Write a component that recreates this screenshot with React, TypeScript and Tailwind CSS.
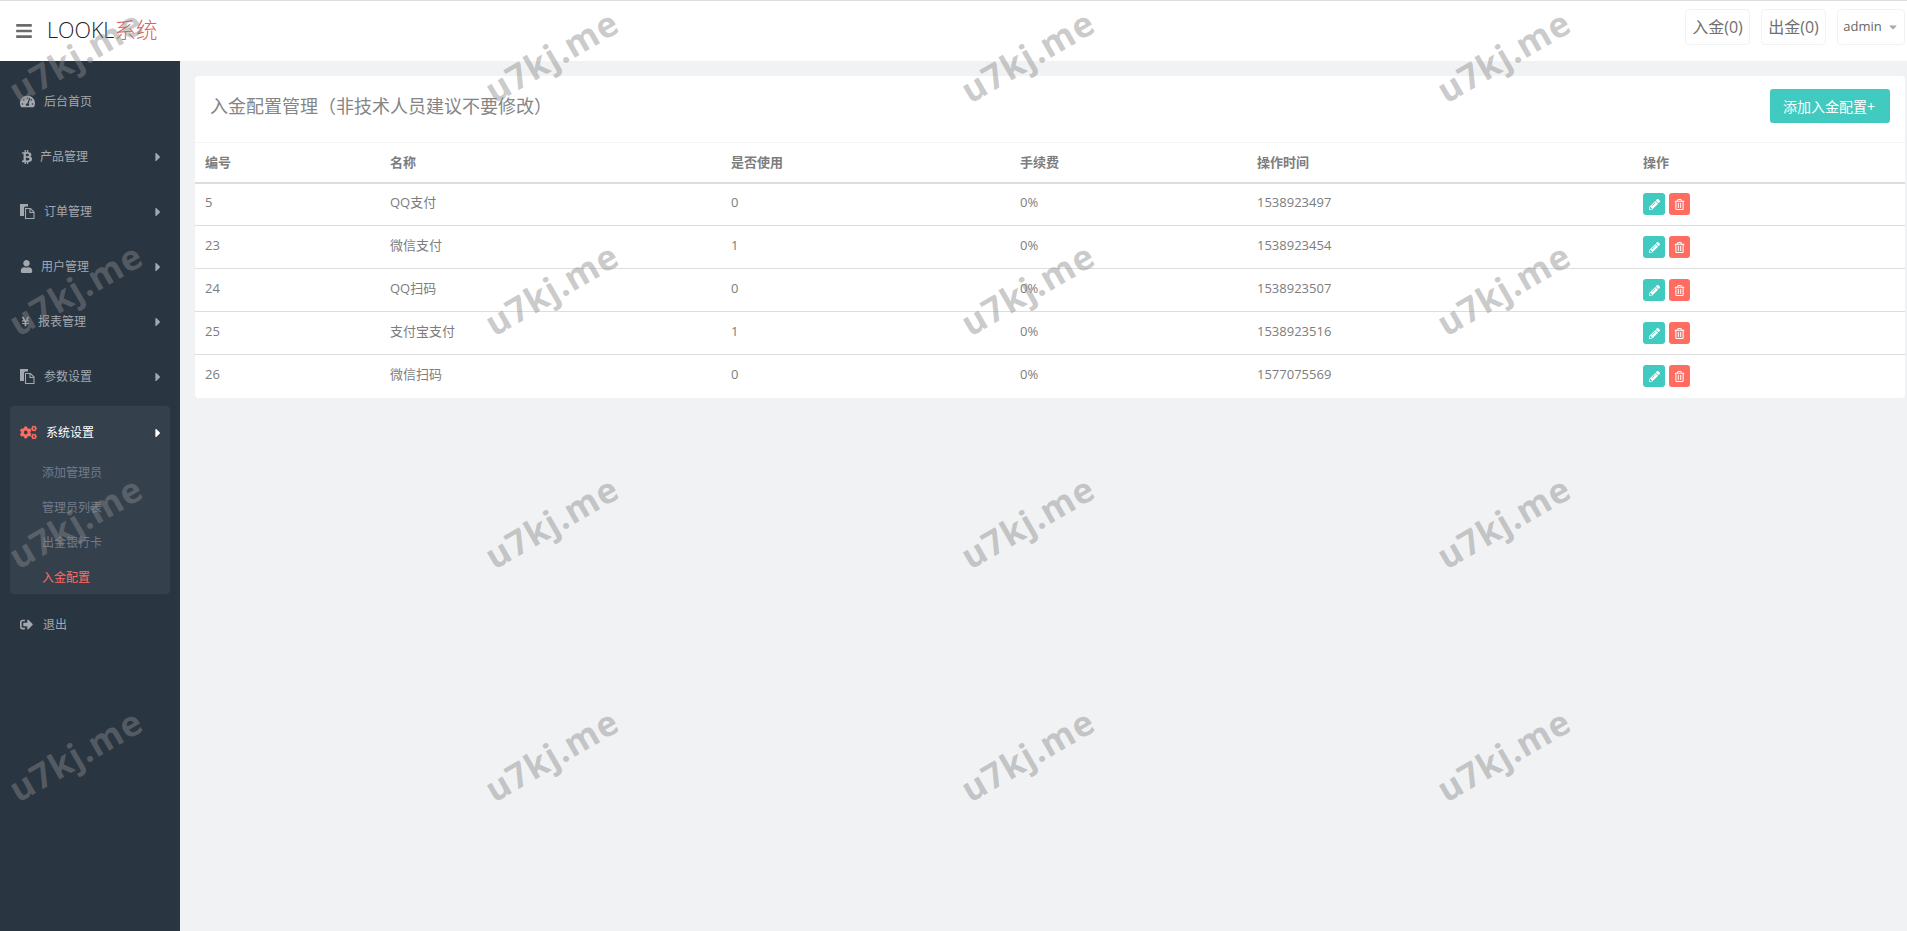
import { FaBars, FaBtc, FaCogs, FaPencilAlt, FaRegTrashAlt, FaSignOutAlt, FaTachometerAlt, FaUser, FaYenSign, FaCaretRight, FaCaretDown } from "react-icons/fa";
import type { ReactNode } from "react";

const font = { fontFamily: '"Open Sans","Noto Sans CJK SC",sans-serif' };

const Files = () => (
  <svg width="15" height="15" viewBox="0 0 15 15" className="mr-[9px] shrink-0">
    <path d="M0 0h8v2.5H5.5A1.5 1.5 0 0 0 4 4v8H0z" fill="#a3a8ae" />
    <path d="M5.5 4.5h5l3.5 3.5v6.5H5.5z" fill="none" stroke="#a3a8ae" strokeWidth="1.1" />
    <path d="M10 4.5V8.5h4" fill="none" stroke="#a3a8ae" strokeWidth="1.1" />
  </svg>
);

function NavItem({ icon, label, caret = true }: { icon: ReactNode; label: string; caret?: boolean }) {
  return (
    <div className="flex h-[55px] items-center pl-[20px] pr-[15px] text-[12px] text-[#a3a8ae]">
      {icon}
      <span>{label}</span>
      {caret && <FaCaretRight className="ml-auto text-[14px] text-[#a3a8ae]" />}
    </div>
  );
}

const rows = [
  ["5", "QQ支付", "0", "0%", "1538923497"],
  ["23", "微信支付", "1", "0%", "1538923454"],
  ["24", "QQ扫码", "0", "0%", "1538923507"],
  ["25", "支付宝支付", "1", "0%", "1538923516"],
  ["26", "微信扫码", "0", "0%", "1577075569"],
];

export default function App() {
  return (
    <div style={font} className="relative flex h-screen flex-col overflow-hidden bg-[#f1f2f4] text-[13px] text-[#7d7d7d]">
      <header className="flex h-[61px] shrink-0 items-center border-t border-[#dddddd] bg-white pr-[2px]">
        <FaBars className="ml-[15px] text-[18px] text-[#6b6b6b]" />
        <div className="-mt-[2px] ml-[14px] text-[21.5px] font-light text-[#222222]">
          LOOKL<span className="text-[#e0625a]">系统</span>
        </div>
        <div className="-mt-[8px] ml-auto flex items-center gap-[11px]">
          <div className="flex h-[36px] w-[65px] items-center justify-center rounded border border-[#f1f2f4] text-[16px] text-[#6f6f6f]">入金(0)</div>
          <div className="flex h-[36px] w-[65px] items-center justify-center rounded border border-[#f1f2f4] text-[16px] text-[#6f6f6f]">出金(0)</div>
          <div className="flex h-[36px] w-[68px] items-center justify-center gap-[5px] rounded border border-[#f1f2f4] text-[13px] text-[#666666]">
            admin <FaCaretDown className="text-[12px] text-[#aaaaaa]" />
          </div>
        </div>
      </header>
      <div className="flex min-h-0 flex-1">
        <aside className="w-[180px] shrink-0 bg-[#2a3542] pt-[13px]">
          <NavItem icon={<FaTachometerAlt className="mr-[9px] text-[15px]" />} label="后台首页" caret={false} />
          <NavItem icon={<FaBtc className="mr-[6px] text-[14px]" />} label="产品管理" />
          <NavItem icon={<Files />} label="订单管理" />
          <NavItem icon={<FaUser className="mr-[8px] text-[13px]" />} label="用户管理" />
          <NavItem icon={<FaYenSign className="mr-[7px] text-[11px]" />} label="报表管理" />
          <NavItem icon={<Files />} label="参数设置" />
          <div className="mx-[10px] mt-[2px] h-[188px] rounded bg-[#35404d]">
            <div className="flex h-[50px] items-center pl-[10px] pr-[5px] pt-[3px] text-[12px] text-white">
              <FaCogs className="mr-[9px] text-[17px] text-[#ff6c60]" />
              <span>系统设置</span>
              <FaCaretRight className="ml-auto text-[14px]" />
            </div>
            <div className="-mt-[1px] flex flex-col pl-[32px] text-[12px] text-[#717c89]">
              <div className="flex h-[35px] items-center">添加管理员</div>
              <div className="flex h-[35px] items-center">管理员列表</div>
              <div className="flex h-[35px] items-center">出金银行卡</div>
              <div className="flex h-[35px] items-center text-[#ff6c60]">入金配置</div>
            </div>
          </div>
          <div className="mt-[3px]">
            <NavItem icon={<FaSignOutAlt className="mr-[10px] text-[13px]" />} label="退出" caret={false} />
          </div>
        </aside>
        <main className="min-w-0 flex-1 pl-[15px] pr-[2px] pt-[15px]">
          <section className="rounded bg-white">
            <div className="flex h-[66px] items-center justify-between pl-[15px] pr-[15px]">
              <h1 className="-mt-[6px] text-[18px] font-normal text-[#858585]">入金配置管理（非技术人员建议不要修改）</h1>
              <button className="-mt-[6px] h-[34px] w-[120px] rounded-[3px] bg-[#41cac0] pr-[2px] text-[14px] text-white">添加入金配置+</button>
            </div>
            <table className="w-full table-fixed border-collapse text-left text-[13px]">
              <colgroup>
                <col className="w-[185px]" />
                <col className="w-[341px]" />
                <col className="w-[289px]" />
                <col className="w-[237px]" />
                <col className="w-[386px]" />
                <col />
              </colgroup>
              <thead>
                <tr className="h-[40px] border-t border-b-2 border-t-[#f4f4f4] border-b-[#dddddd]">
                  {["编号", "名称", "是否使用", "手续费", "操作时间", "操作"].map((h) => (
                    <th key={h} className="px-[10px] font-semibold">{h}</th>
                  ))}
                </tr>
              </thead>
              <tbody>
                {rows.map((r, i) => (
                  <tr key={r[0]} className={"h-[43px] " + (i < 4 ? "border-b border-[#dddddd]" : "")}>
                    {r.map((c, j) => (
                      <td key={j} className="px-[10px] pb-[3px]">{c}</td>
                    ))}
                    <td className="px-[10px]">
                      <div className="flex gap-[4px]">
                        <span className="flex h-[22px] w-[22px] items-center justify-center rounded-[3px] bg-[#41cac0] text-white">
                          <FaPencilAlt className="text-[11px]" />
                        </span>
                        <span className="flex h-[22px] w-[21px] items-center justify-center rounded-[3px] bg-[#ff6c60] text-white">
                          <FaRegTrashAlt className="text-[11px]" />
                        </span>
                      </div>
                    </td>
                  </tr>
                ))}
              </tbody>
            </table>
          </section>
        </main>
      </div>
      <div aria-hidden className="pointer-events-none absolute inset-0 overflow-hidden">
        <div className="-ml-[162px] -mt-[60px] grid grid-cols-[repeat(4,476px)] auto-rows-[233px]">
          {Array.from({ length: 16 }).map((_, i) => (
            <div key={i} className="flex items-center justify-center">
              <span style={{ fontFamily: '"Open Sans",sans-serif' }} className="-rotate-[30deg] whitespace-nowrap text-[35px] font-bold tracking-[1px] text-[#8a8a8a]/45">u7kj.me</span>
            </div>
          ))}
        </div>
      </div>
    </div>
  );
}
